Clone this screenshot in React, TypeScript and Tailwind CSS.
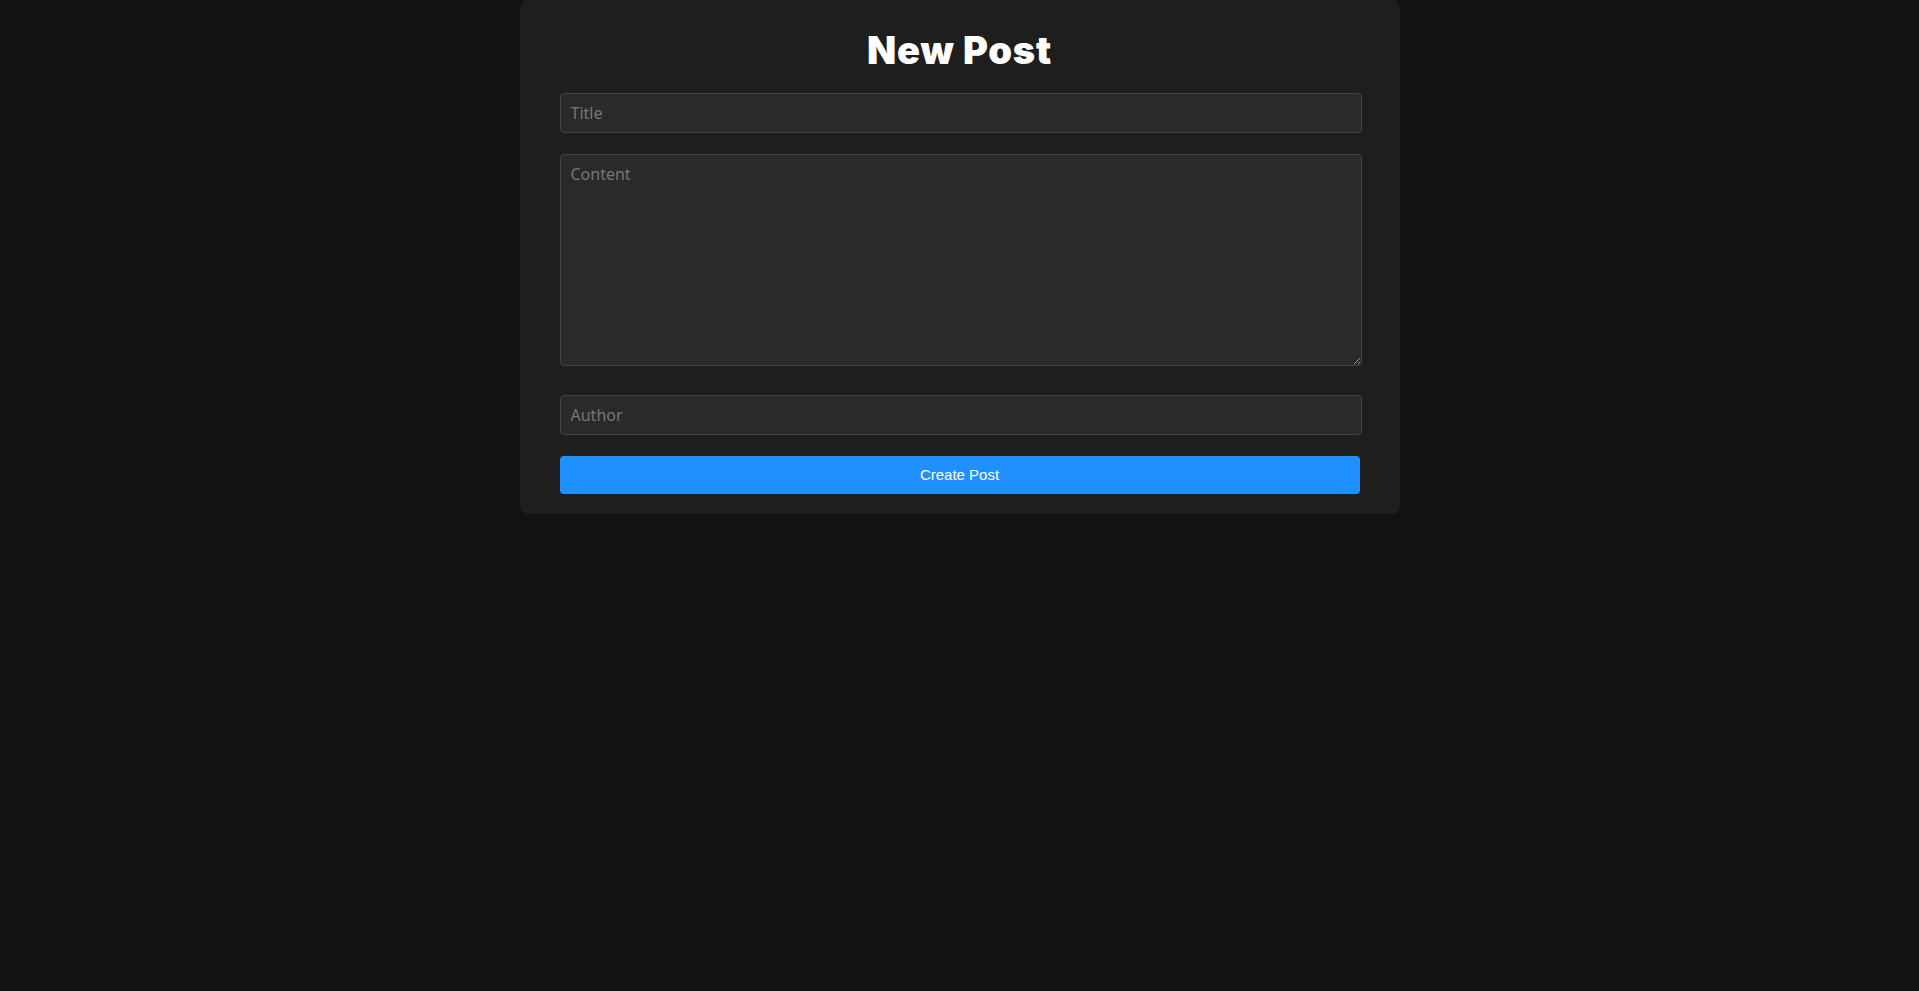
import { useState } from 'react';

export default function App() {
  const [title, setTitle] = useState('');
  const [content, setContent] = useState('');
  const [author, setAuthor] = useState('');

  const fieldClass =
    "block w-[802px] rounded-[4px] border border-[#444444] bg-[#2a2a2a] px-[10px] text-[16px] text-white outline-none placeholder:text-[#777777] [font-family:'Noto_Sans',sans-serif]";

  return (
    <div className="min-h-[991px] w-full bg-[#121212]">
      <div className="mx-auto flex w-[880px] flex-col rounded-lg bg-[#1e1e1e] px-10 pb-5 pt-[28px]">
        <h1 className="text-center text-[38px] font-black leading-[44px] tracking-[0.8px] text-white [font-family:Inter,sans-serif]">
          New Post
        </h1>
        <form className="mt-[21px] flex flex-col" onSubmit={(e) => e.preventDefault()}>
          <input
            className={`${fieldClass} h-10`}
            placeholder="Title"
            value={title}
            onChange={(e) => setTitle(e.target.value)}
          />
          <textarea
            className={`${fieldClass} mt-[21px] h-[212px] py-[7px]`}
            placeholder="Content"
            value={content}
            onChange={(e) => setContent(e.target.value)}
          />
          <input
            className={`${fieldClass} mt-[29px] h-10`}
            placeholder="Author"
            value={author}
            onChange={(e) => setAuthor(e.target.value)}
          />
          <button
            type="submit"
            className="mt-[21px] h-[38px] w-[800px] rounded-[4px] bg-[#1e90ff] text-[15px] text-white [font-family:'Liberation_Sans',Arial,sans-serif]"
          >
            Create Post
          </button>
        </form>
      </div>
    </div>
  );
}
